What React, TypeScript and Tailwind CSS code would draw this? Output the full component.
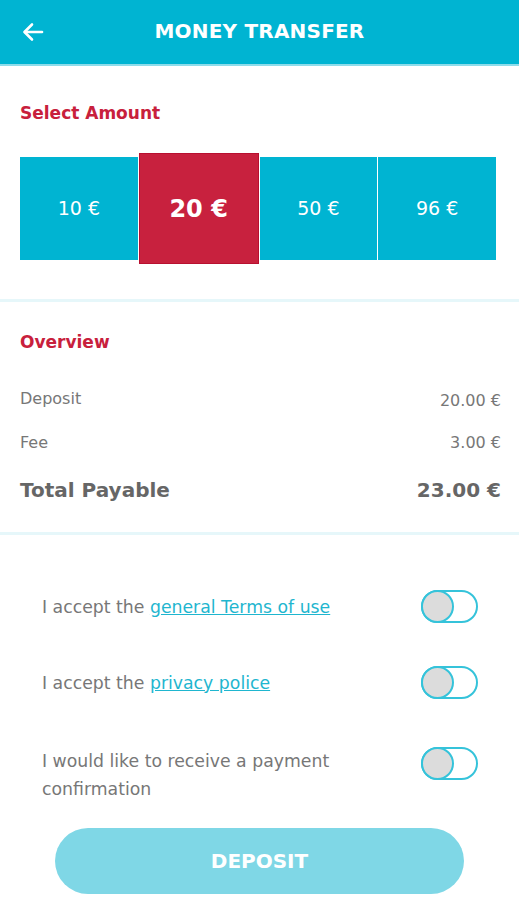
import { useState } from "react";

const amounts = [10, 20, 50, 96];

function Toggle({ on, onClick }: { on: boolean; onClick: () => void }) {
  return (
    <button
      onClick={onClick}
      className={"relative w-[57px] h-[33px] rounded-full border-2 border-[#35c3da] shrink-0 " + (on ? "bg-[#35c3da]" : "bg-white")}
    >
      <span
        className={"absolute top-[-2px] h-[33px] w-[33px] rounded-full bg-[#dcdcdc] border-2 border-[#35c3da] " + (on ? "left-[22px]" : "left-[-2px]")}
      />
    </button>
  );
}

function App() {
  const [selected, setSelected] = useState(20);
  const [checks, setChecks] = useState([false, false, false]);
  const fee = 3;

  const flip = (i: number) => {
    const next = [...checks];
    next[i] = !next[i];
    setChecks(next);
  };

  return (
    <div className="w-[519px] h-[900px] bg-white overflow-hidden text-[#777]" style={{ fontFamily: "'DejaVu Sans', Verdana, sans-serif" }}>
      {/* header */}
      <div className="h-[66px] bg-[#00b4d2] flex items-center relative border-b-2 border-[#8edcea]">
        <svg className="absolute left-[21px] top-[20px]" width="24" height="24" viewBox="0 0 24 24" fill="none" stroke="white" strokeWidth="2.6" strokeLinecap="round" strokeLinejoin="round">
          <path d="M21 12H4" />
          <path d="M11 4.5 3.5 12l7.5 7.5" />
        </svg>
        <h1 className="w-full text-center text-white font-bold text-[20px] tracking-[0.2px] pb-[3px]">MONEY TRANSFER</h1>
      </div>

      {/* select amount */}
      <div className="px-[20px] pt-[37px] pb-[35px] border-b-[3px] border-[#e6f7fa]">
        <h2 className="text-[#c8203c] font-bold text-[17px] leading-[20px]">Select Amount</h2>
        <div className="mt-[30px] flex items-center gap-[1px] pr-[3px]">
          {amounts.map((a) => {
            const active = a === selected;
            return (
              <button
                key={a}
                onClick={() => setSelected(a)}
                className={
                  "flex-1 flex items-center justify-center text-white " +
                  (active
                    ? "bg-[#c8213e] h-[111px] font-bold text-[24px] border border-[#b81030]"
                    : "bg-[#00b4d2] h-[103px] text-[19px]")
                }
              >
                {a} €
              </button>
            );
          })}
        </div>
      </div>

      {/* overview */}
      <div className="pl-[20px] pr-[18px] pt-[30px] pb-[30px] border-b-[3px] border-[#e6f7fa]">
        <h2 className="text-[#c8203c] font-bold text-[17px] leading-[20px]">Overview</h2>
        <div className="mt-[37px] flex justify-between text-[16px] leading-[20px]">
          <span>Deposit</span>
          <span className="pt-[2px]">{selected.toFixed(2)} €</span>
        </div>
        <div className="mt-[22px] flex justify-between text-[16px] leading-[20px]">
          <span>Fee</span>
          <span>{fee.toFixed(2)} €</span>
        </div>
        <div className="mt-[25px] flex justify-between text-[20px] leading-[24px] font-bold text-[#666]">
          <span>Total Payable</span>
          <span>{(selected + fee).toFixed(2)} €</span>
        </div>
      </div>

      {/* agreements */}
      <div className="pl-[42px] pr-[41px] pt-[55px] flex flex-col text-[17.3px] leading-[28px]">
        <div className="flex items-center justify-between">
          <span>
            I accept the <a className="text-[#1fb6cf] underline">general Terms of use</a>
          </span>
          <Toggle on={checks[0]} onClick={() => flip(0)} />
        </div>
        <div className="mt-[43px] flex items-center justify-between">
          <span>
            I accept the <a className="text-[#1fb6cf] underline">privacy police</a>
          </span>
          <Toggle on={checks[1]} onClick={() => flip(1)} />
        </div>
        <div className="mt-[48px] flex items-start justify-between">
          <span className="w-[320px]">I would like to receive a payment confirmation</span>
          <Toggle on={checks[2]} onClick={() => flip(2)} />
        </div>
      </div>

      <div className="px-[55px] pt-[25px]">
        <button className="w-full h-[66px] rounded-full bg-[#7fd7e6] text-white font-bold text-[20px]">DEPOSIT</button>
      </div>
    </div>
  );
}

export default App;
